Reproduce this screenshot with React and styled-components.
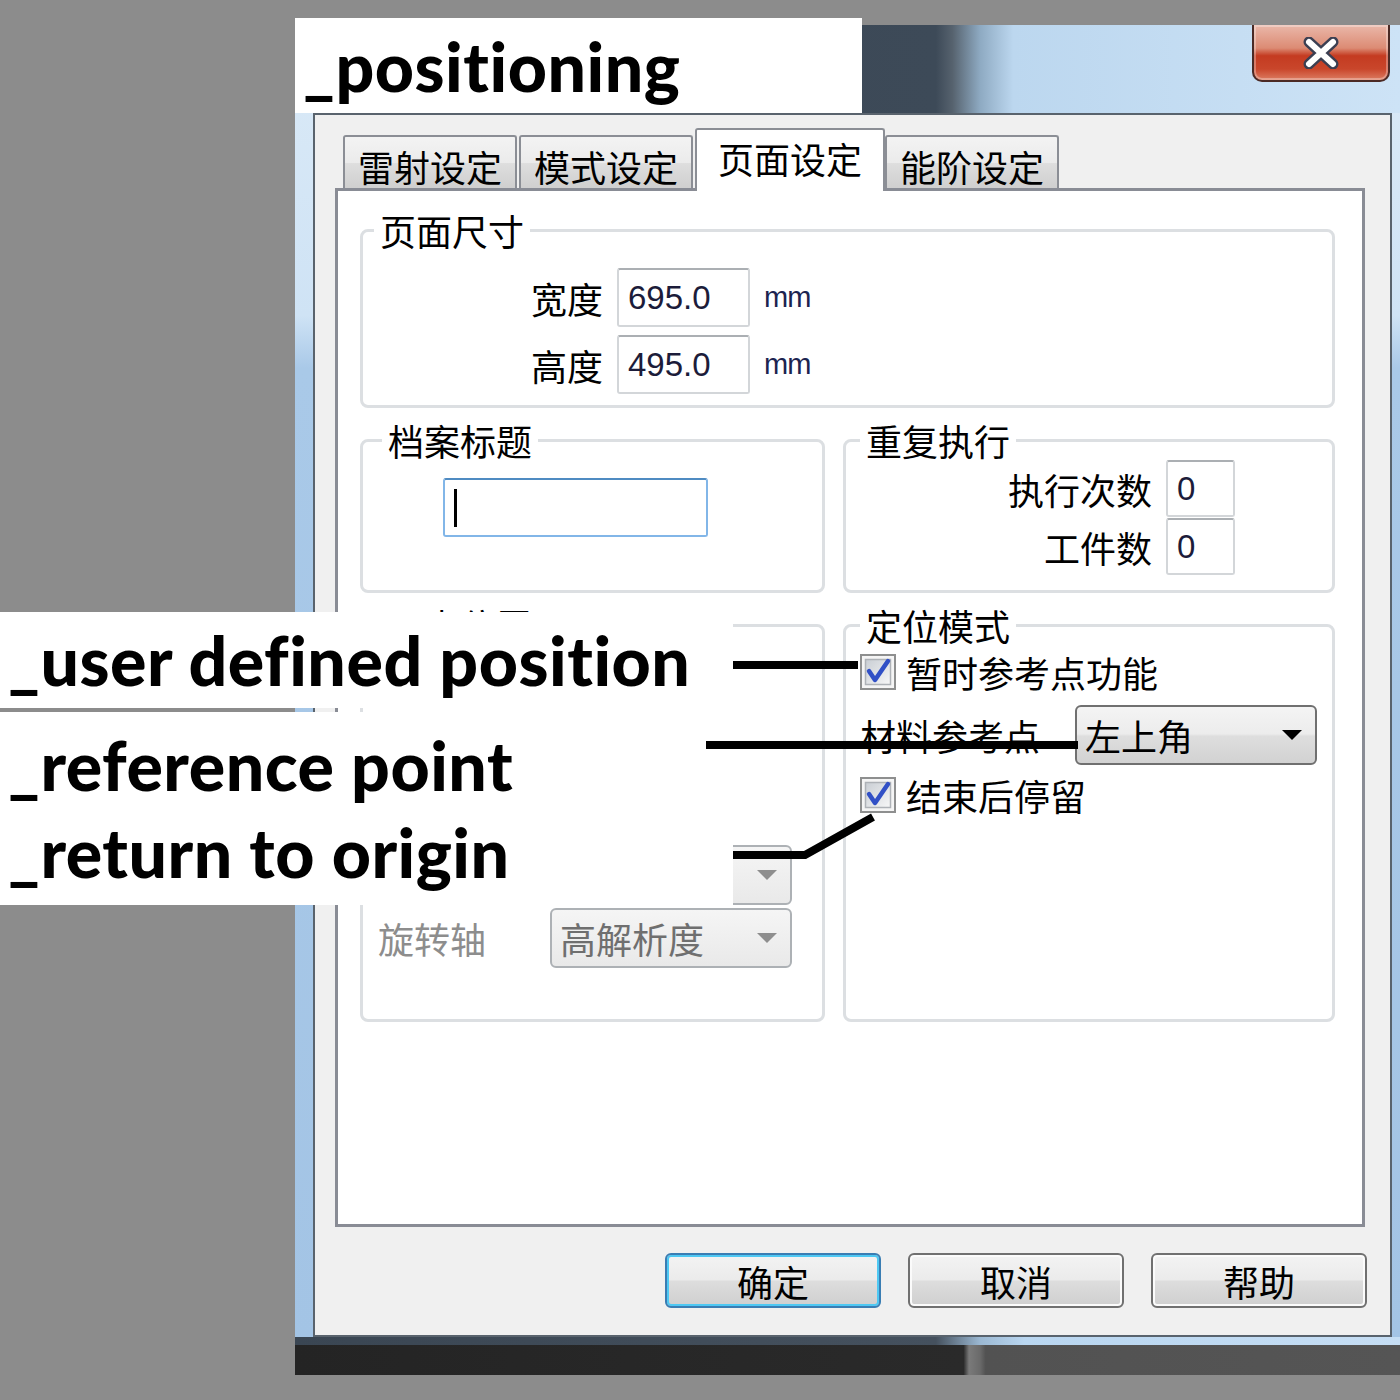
import React from 'react';
import styled, { createGlobalStyle } from 'styled-components';

const GlobalStyle = createGlobalStyle`
  html, body {
    margin: 0;
    padding: 0;
    background: #8c8c8c;
  }
  body {
    font-family: "Noto Sans CJK SC", "Liberation Sans", sans-serif;
  }
`;

const Page = styled.div`
  position: relative;
  box-sizing: border-box;
  width: 1400px;
  height: 1400px;
  overflow: hidden;
  background: #8c8c8c;
  padding: 25px 0 0 295px;
`;

const Window = styled.div`
  width: 1105px;
  display: flex;
  flex-direction: column;
  background: linear-gradient(to bottom, #dbeaf7 0%, #cfe3f5 22%, #a9c9e8 26%, #a3c4e5 100%);
`;

const TitleBar = styled.div`
  height: 88px;
  display: flex;
  justify-content: flex-end;
  align-items: flex-start;
  padding-right: 10px;
  background: linear-gradient(to right, #394553 0%, #3d4a58 58%, #56626e 59.5%, #8eaac2 62%, #bcd7ef 65%, #cde3f6 100%);
`;

const CloseButton = styled.div`
  box-sizing: border-box;
  width: 138px;
  height: 57px;
  border: 2px solid #4b2a25;
  border-top: none;
  border-radius: 0 0 10px 10px;
  background: linear-gradient(to bottom, #eab8aa 0%, #dc8b74 42%, #c43b21 56%, #c9462b 80%, #dc7c62 100%);
  box-shadow: inset 0 0 0 2px rgba(255, 255, 255, 0.3);
  display: flex;
  align-items: center;
  justify-content: center;
`;

const Client = styled.div`
  box-sizing: border-box;
  width: 1079px;
  margin-left: 18px;
  border: 2px solid #59636d;
  background: #f0f0f0;
  padding: 13px 23px 27px 20px;
  display: flex;
  flex-direction: column;
`;

const BottomFrame = styled.div`
  height: 8px;
  background: linear-gradient(to right, #3a4653 0%, #45515e 58%, #9bb8d2 62%, #b9d6f0 66%, #c6def4 100%);
`;

const Shadow = styled.div`
  width: 1105px;
  height: 30px;
  background: linear-gradient(to right, #242424 0%, #2a2a2a 60.5%, #7a7a7a 61%, #6a6a6a 62%, #525252 62.5%, #555555 100%);
`;

const TabStrip = styled.div`
  display: flex;
  align-items: flex-end;
  padding-left: 8px;
  margin-bottom: -3px;
  position: relative;
  z-index: 1;
`;

const Tab = styled.div`
  box-sizing: border-box;
  height: ${p => (p.$active ? 63 : 53)}px;
  margin-bottom: ${p => (p.$active ? 0 : 3)}px;
  margin-right: ${p => (p.$active ? 0 : 2)}px;
  padding: ${p => (p.$active ? '0 21px 6px' : '6px 13px 0')};
  border: 2px solid #8b8e95;
  border-bottom: none;
  border-radius: 3px 3px 0 0;
  background: ${p => (p.$active ? '#ffffff' : 'linear-gradient(to bottom, #f3f3f3 0%, #ebebeb 50%, #dedede 52%, #cfcfcf 100%)')};
  display: flex;
  align-items: center;
  font-size: 36px;
  line-height: 40px;
  color: #000;
  white-space: nowrap;
`;

const TabPanel = styled.div`
  box-sizing: border-box;
  height: 1039px;
  margin-right: 2px;
  border: 3px solid #898c95;
  background: #ffffff;
  padding: 19px 27px 0 22px;
  display: grid;
  grid-template-rows: 198px 173px 417px;
  row-gap: 12px;
`;

const GroupRow = styled.div`
  display: grid;
  grid-template-columns: 465px 492px;
  column-gap: 18px;
`;

const Group = styled.fieldset`
  box-sizing: border-box;
  height: 100%;
  min-width: 0;
  margin: 0;
  padding: 0;
  border: 3px solid #dcdfe2;
  border-radius: 8px;
  display: flex;
  flex-direction: column;
`;

const Legend = styled.legend`
  margin-left: ${p => p.$offset}px;
  padding: 0 6px;
  font-size: 36px;
  line-height: 40px;
  color: #000;
`;

const Label = styled.div`
  font-size: 36px;
  line-height: 40px;
  color: ${p => (p.$muted ? '#8d8d8d' : '#000')};
  text-align: ${p => (p.$right ? 'right' : 'left')};
  white-space: nowrap;
`;

const Field = styled.div`
  box-sizing: border-box;
  width: ${p => p.$w}px;
  height: ${p => p.$h}px;
  border: 2px solid ${p => (p.$focused ? '#82b6e8' : '#d3d6d9')};
  border-top-color: ${p => (p.$focused ? '#4f8bc2' : '#abafb3')};
  border-radius: 3px;
  background: #ffffff;
  padding-left: 9px;
  display: flex;
  align-items: center;
  font-family: "Liberation Sans", "DejaVu Sans", sans-serif;
  font-size: 33px;
  color: #1c1c3a;
`;

const Caret = styled.span`
  width: 3px;
  height: 38px;
  background: #000;
`;

const Unit = styled.span`
  font-family: "Liberation Sans", "DejaVu Sans", sans-serif;
  font-size: 29px;
  letter-spacing: -1px;
  color: #1c2450;
`;

const SizeRows = styled.div`
  padding-top: 18px;
  display: flex;
  flex-direction: column;
  gap: 8px;
`;

const SizeRow = styled.div`
  display: grid;
  grid-template-columns: 240px 133px auto;
  column-gap: 14px;
  align-items: center;
`;

const TitleBody = styled.div`
  padding: 18px 0 0 80px;
`;

const RepeatBody = styled.div`
  display: flex;
  flex-direction: column;
  align-items: flex-end;
  gap: 1px;
  padding-right: 97px;
`;

const RepeatRow = styled.div`
  display: flex;
  align-items: center;
  gap: 14px;
`;

const AxisBody = styled.div`
  flex: 1;
  display: flex;
  flex-direction: column;
  justify-content: flex-end;
  gap: 3px;
  padding: 0 0 51px 15px;
`;

const AxisRow = styled.div`
  display: grid;
  grid-template-columns: 172px 242px;
  align-items: center;
`;

const Select = styled.div`
  box-sizing: border-box;
  width: 242px;
  height: 60px;
  border: 2px solid ${p => (p.$disabled ? '#adb1b5' : '#707070')};
  border-radius: 6px;
  background: ${p => (p.$disabled
    ? 'linear-gradient(to bottom, #f5f5f5 0%, #efefef 50%, #e9e9e9 100%)'
    : 'linear-gradient(to bottom, #f4f4f4 0%, #ececec 48%, #dedede 52%, #d2d2d2 100%)')};
  padding: 0 12px 0 8px;
  display: flex;
  align-items: center;
  justify-content: space-between;
  font-size: 36px;
  line-height: 40px;
  color: ${p => (p.$disabled ? '#6f6f6f' : '#000')};
`;

const ModeBody = styled.div`
  display: flex;
  flex-direction: column;
  padding: 7px 15px 0 14px;
`;

const CheckRow = styled.div`
  height: 40px;
  margin-top: ${p => p.$gap || 0}px;
  display: flex;
  align-items: center;
  gap: 10px;
`;

const RefRow = styled.div`
  margin-top: 13px;
  display: flex;
  align-items: center;
  justify-content: space-between;
`;

const ButtonBar = styled.div`
  margin-top: 26px;
  display: flex;
  justify-content: flex-end;
  gap: 27px;
`;

const Button = styled.div`
  box-sizing: border-box;
  width: 216px;
  height: 55px;
  border: 2px solid ${p => (p.$focused ? '#3a7db3' : '#707070')};
  border-radius: 6px;
  background: linear-gradient(to bottom, #f3f3f3 0%, #ebebeb 48%, #dddddd 52%, #cfcfcf 100%);
  box-shadow: inset 0 0 0 2px ${p => (p.$focused ? '#4ec8f3' : '#fbfbfb')};
  display: flex;
  align-items: center;
  justify-content: center;
  font-size: 36px;
  color: #000;
`;

const Callout = styled.div`
  position: absolute;
  box-sizing: border-box;
  left: ${p => p.$x}px;
  top: ${p => p.$y}px;
  width: ${p => p.$w}px;
  height: ${p => p.$h}px;
  padding-left: ${p => p.$pad}px;
  background: #ffffff;
  display: flex;
  flex-direction: column;
  justify-content: space-evenly;
  z-index: 5;
`;

const CalloutText = styled.div`
  font-family: "Lato", "DejaVu Sans", sans-serif;
  font-weight: 900;
  font-size: 68px;
  line-height: 1;
  letter-spacing: 0.5px;
  color: #000;
  white-space: nowrap;
`;

const Leaders = styled.svg`
  position: absolute;
  left: 0;
  top: 0;
  z-index: 6;
  pointer-events: none;
`;

const CloseGlyph = () => (
  <svg width="38" height="32" viewBox="0 0 38 32">
    <path d="M7 5 L31 27 M31 5 L7 27" stroke="#3b3f52" strokeWidth="11" strokeLinecap="round" />
    <path d="M7 5 L31 27 M31 5 L7 27" stroke="#ffffff" strokeWidth="6" strokeLinecap="round" />
  </svg>
);

const Arrow = ({ color }) => (
  <svg width="22" height="12" viewBox="0 0 22 12">
    <path d="M1 1 L21 1 L11 11 Z" fill={color} />
  </svg>
);

const CheckBox = () => (
  <svg width="36" height="36" viewBox="0 0 36 36">
    <defs>
      <linearGradient id="cbFill" x1="0" y1="0" x2="1" y2="1">
        <stop offset="0" stopColor="#c9ced4" />
        <stop offset="1" stopColor="#f7f7f7" />
      </linearGradient>
    </defs>
    <rect x="1" y="1" width="34" height="34" fill="#f5f5f5" stroke="#8e8f8f" strokeWidth="2" />
    <rect x="5.5" y="5.5" width="25" height="25" fill="url(#cbFill)" stroke="#aeb2b7" strokeWidth="1.5" />
    <path d="M9 17 L15 26 L28 7" fill="none" stroke="#3150c6" strokeWidth="4.5" strokeLinecap="round" strokeLinejoin="round" />
  </svg>
);

export default function App() {
  return (
    <Page>
      <GlobalStyle />
      <Window>
        <TitleBar>
          <CloseButton>
            <CloseGlyph />
          </CloseButton>
        </TitleBar>
        <Client>
          <TabStrip>
            <Tab>雷射设定</Tab>
            <Tab>模式设定</Tab>
            <Tab $active>页面设定</Tab>
            <Tab>能阶设定</Tab>
          </TabStrip>
          <TabPanel>
            <Group>
              <Legend $offset={11}>页面尺寸</Legend>
              <SizeRows>
                <SizeRow>
                  <Label $right>宽度</Label>
                  <Field $w={133} $h={59}>695.0</Field>
                  <Unit>mm</Unit>
                </SizeRow>
                <SizeRow>
                  <Label $right>高度</Label>
                  <Field $w={133} $h={59}>495.0</Field>
                  <Unit>mm</Unit>
                </SizeRow>
              </SizeRows>
            </Group>

            <GroupRow>
              <Group>
                <Legend $offset={19}>档案标题</Legend>
                <TitleBody>
                  <Field $w={265} $h={59} $focused>
                    <Caret />
                  </Field>
                </TitleBody>
              </Group>
              <Group>
                <Legend $offset={14}>重复执行</Legend>
                <RepeatBody>
                  <RepeatRow>
                    <Label>执行次数</Label>
                    <Field $w={69} $h={57}>0</Field>
                  </RepeatRow>
                  <RepeatRow>
                    <Label>工件数</Label>
                    <Field $w={69} $h={57}>0</Field>
                  </RepeatRow>
                </RepeatBody>
              </Group>
            </GroupRow>

            <GroupRow>
              <Group>
                <Legend $offset={19}>原点位置</Legend>
                <AxisBody>
                  <AxisRow>
                    <Label $muted>原点</Label>
                    <Select $disabled>
                      <span>左上角</span>
                      <Arrow color="#8e8e8e" />
                    </Select>
                  </AxisRow>
                  <AxisRow>
                    <Label $muted>旋转轴</Label>
                    <Select $disabled>
                      <span>高解析度</span>
                      <Arrow color="#8e8e8e" />
                    </Select>
                  </AxisRow>
                </AxisBody>
              </Group>
              <Group>
                <Legend $offset={14}>定位模式</Legend>
                <ModeBody>
                  <CheckRow>
                    <CheckBox />
                    <Label>暂时参考点功能</Label>
                  </CheckRow>
                  <RefRow>
                    <Label>材料参考点</Label>
                    <Select>
                      <span>左上角</span>
                      <Arrow color="#000" />
                    </Select>
                  </RefRow>
                  <CheckRow $gap={10}>
                    <CheckBox />
                    <Label>结束后停留</Label>
                  </CheckRow>
                </ModeBody>
              </Group>
            </GroupRow>
          </TabPanel>
          <ButtonBar>
            <Button $focused>确定</Button>
            <Button>取消</Button>
            <Button>帮助</Button>
          </ButtonBar>
        </Client>
        <BottomFrame />
      </Window>
      <Shadow />

      <Callout $x={295} $y={18} $w={567} $h={95} $pad={8}>
        <CalloutText>_positioning</CalloutText>
      </Callout>
      <Callout $x={0} $y={612} $w={733} $h={96} $pad={8}>
        <CalloutText>_user defined position</CalloutText>
      </Callout>
      <Callout $x={0} $y={712} $w={733} $h={193} $pad={8}>
        <CalloutText>_reference point</CalloutText>
        <CalloutText>_return to origin</CalloutText>
      </Callout>

      <Leaders width="1400" height="1400" viewBox="0 0 1400 1400">
        <path d="M733 665 L858 665" stroke="#000" strokeWidth="8" />
        <path d="M706 745 L1078 745" stroke="#000" strokeWidth="8" />
        <path d="M733 855 L805 855 L873 817" fill="none" stroke="#000" strokeWidth="8" />
      </Leaders>
    </Page>
  );
}
